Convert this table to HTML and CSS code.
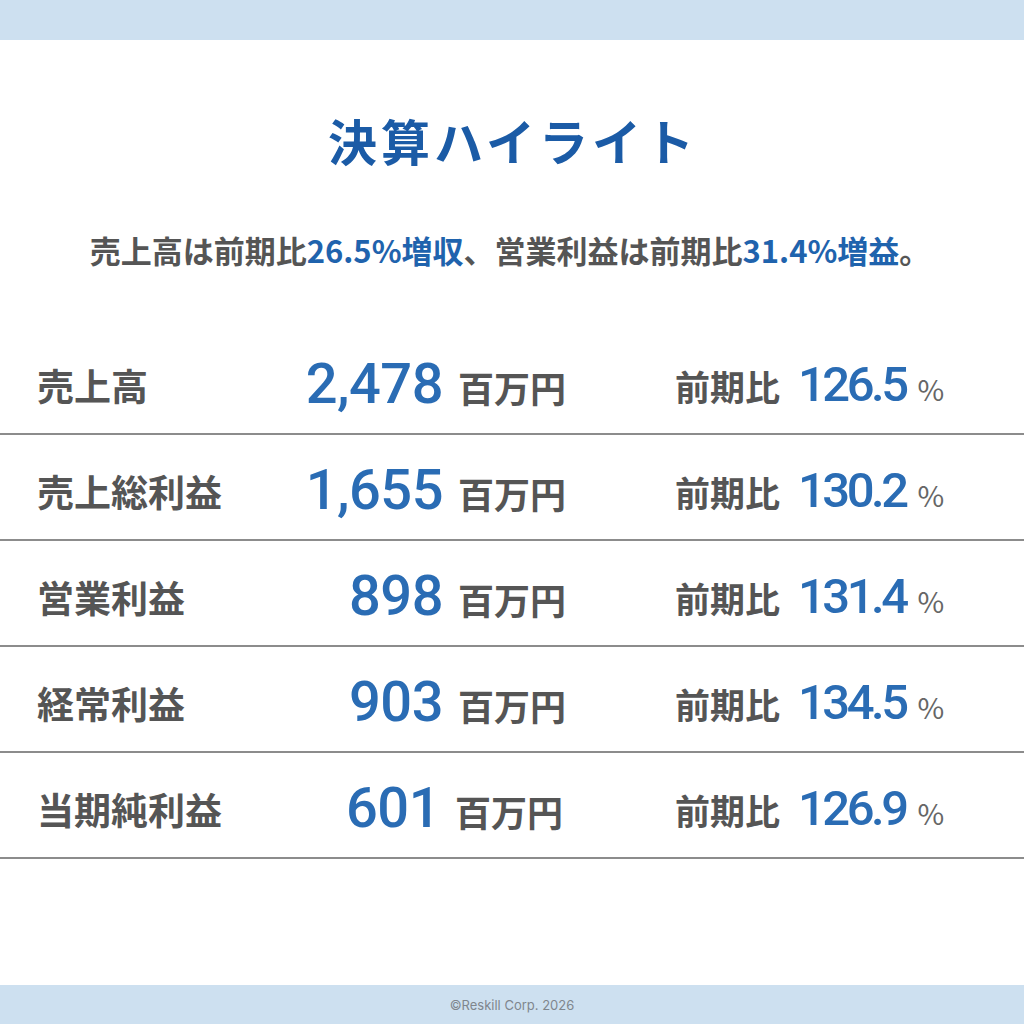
FILE: index.html
```html
<!DOCTYPE html>
<html lang="ja">
<head>
<meta charset="utf-8">
<title>決算ハイライト</title>
<link rel="stylesheet" href="styles.css">
</head>
<body>
<div class="page">
  <header class="band band-top"></header>
  <main class="main">
    <h1 class="title">決算ハイライト</h1>
    <p class="lead">売上高は前期比<span class="hl">26.5%増収</span>、営業利益は前期比<span class="hl">31.4%増益</span>。</p>
    <div class="table">
      <div class="row">
        <div class="label">売上高</div>
        <div class="value"><span class="num">2,478</span><span class="unit">百万円</span></div>
        <div class="cmp"><span class="cmp-label">前期比</span><span class="pct">126.5</span><span class="pct-unit">%</span></div>
      </div>
      <div class="row">
        <div class="label">売上総利益</div>
        <div class="value"><span class="num">1,655</span><span class="unit">百万円</span></div>
        <div class="cmp"><span class="cmp-label">前期比</span><span class="pct">130.2</span><span class="pct-unit">%</span></div>
      </div>
      <div class="row">
        <div class="label">営業利益</div>
        <div class="value"><span class="num">898</span><span class="unit">百万円</span></div>
        <div class="cmp"><span class="cmp-label">前期比</span><span class="pct">131.4</span><span class="pct-unit">%</span></div>
      </div>
      <div class="row">
        <div class="label">経常利益</div>
        <div class="value"><span class="num">903</span><span class="unit">百万円</span></div>
        <div class="cmp"><span class="cmp-label">前期比</span><span class="pct">134.5</span><span class="pct-unit">%</span></div>
      </div>
      <div class="row">
        <div class="label">当期純利益</div>
        <div class="value value-shift"><span class="num">601</span><span class="unit">百万円</span></div>
        <div class="cmp"><span class="cmp-label">前期比</span><span class="pct">126.9</span><span class="pct-unit">%</span></div>
      </div>
    </div>
  </main>
  <footer class="band band-bottom">©Reskill Corp. 2026</footer>
</div>
</body>
</html>
```

FILE: styles.css
```css
* { box-sizing: border-box; }
html, body { margin: 0; padding: 0; background: #ffffff; }
body {
  font-family: "Noto Sans CJK JP", "Noto Sans", sans-serif;
  color: #555555;
}
.page {
  width: 1024px;
  height: 1024px;
  display: flex;
  flex-direction: column;
}
.band { background: #cde0f0; flex: none; }
.band-top { height: 40px; }
.band-bottom {
  height: 39px;
  display: flex;
  align-items: center;
  justify-content: center;
  font-family: "Inter", "Roboto", sans-serif;
  font-size: 13px;
  color: #7f868d;
  padding-top: 1px;
}
.main {
  flex: 1;
  display: flex;
  flex-direction: column;
  align-items: stretch;
}
.title {
  margin: 71px 0 0;
  text-align: center;
  font-size: 49px;
  line-height: 58px;
  font-weight: 700;
  color: #1b5ba6;
  letter-spacing: 4px;
  padding-left: 2px;
}
.lead {
  margin: 61px 0 0;
  text-align: center;
  font-size: 31px;
  line-height: 40px;
  font-weight: 700;
  color: #555555;
  padding-right: 4px;
}
.hl { color: #1f63ad; }
.table {
  margin-top: 59px;
  display: flex;
  flex-direction: column;
}
.row {
  display: grid;
  grid-template-columns: 240px 289px 1fr;
  align-items: center;
  height: 106px;
  padding: 6px 0 0 37px;
  border-bottom: 2px solid #8c8c8c;
}
.label {
  font-size: 37px;
  font-weight: 700;
  color: #555555;
  line-height: 1;
  padding-top: 2px;
}
.value {
  display: flex;
  align-items: baseline;
  justify-content: flex-end;
  gap: 15px;
}
.value-shift { padding-right: 3px; }
.num {
  font-family: "Roboto", "Noto Sans CJK JP", sans-serif;
  font-size: 56px;
  font-weight: 500;
  color: #2a6cb4;
  line-height: 1;
  letter-spacing: -0.5px;
}
.unit {
  font-size: 36px;
  font-weight: 700;
  color: #555555;
  line-height: 1;
}
.cmp {
  display: flex;
  align-items: baseline;
  padding-left: 109px;
}
.cmp-label {
  font-size: 35px;
  font-weight: 700;
  color: #555555;
  line-height: 1;
  margin-right: 18px;
}
.pct {
  font-family: "Roboto", "Noto Sans CJK JP", sans-serif;
  font-size: 49px;
  font-weight: 500;
  color: #2a6cb4;
  line-height: 1;
  letter-spacing: -3.5px;
  margin-right: 12px;
}
.pct-unit {
  font-size: 29px;
  font-weight: 400;
  color: #666666;
  line-height: 1;
}
```
